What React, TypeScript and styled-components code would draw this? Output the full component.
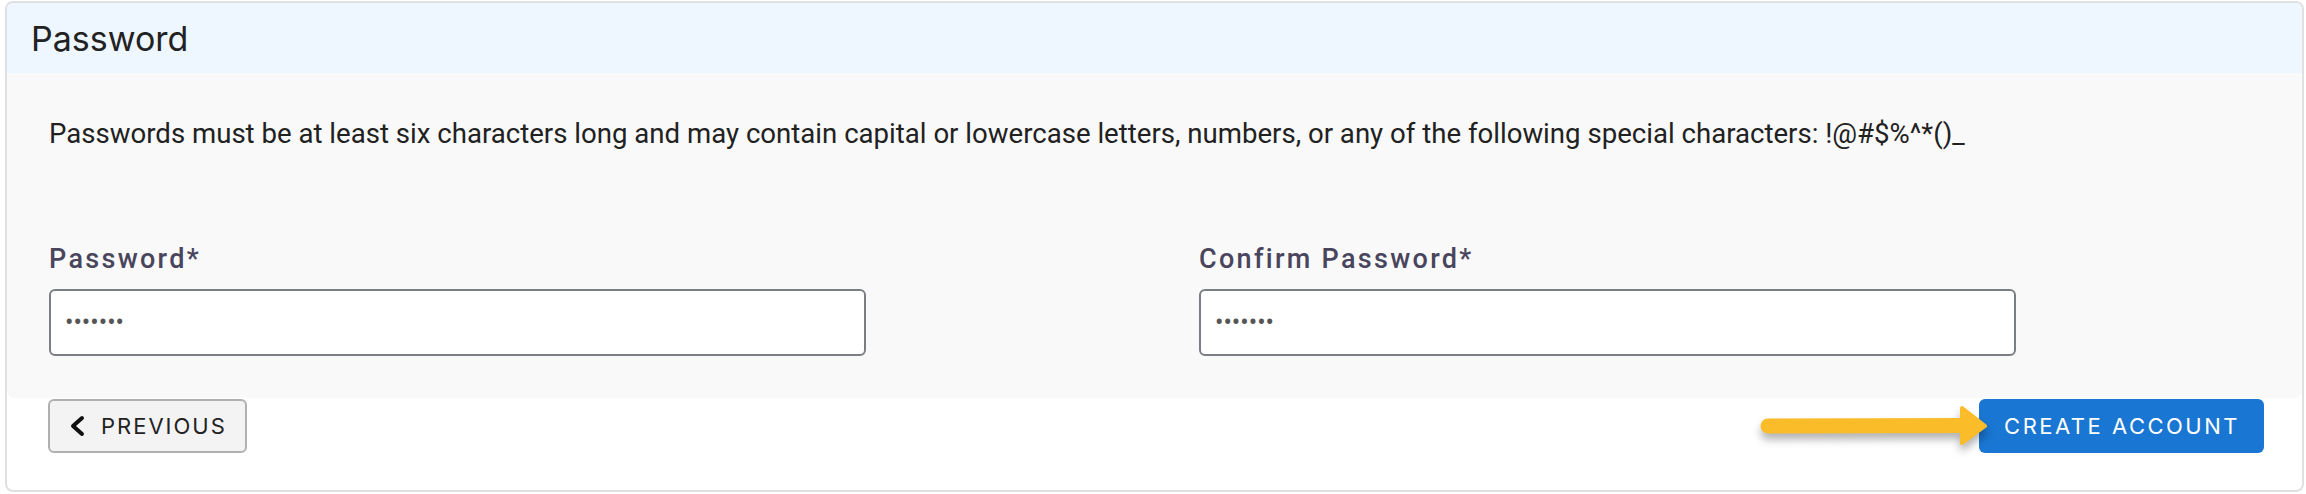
import React from 'react';
import styled, { createGlobalStyle } from 'styled-components';

const GlobalStyle = createGlobalStyle`
  body {
    margin: 0;
    background: #ffffff;
    font-family: Roboto, 'Liberation Sans', sans-serif;
  }
`;

const Page = styled.div`
  padding: 1px 2px 2px 5px;
`;

const Card = styled.section`
  border: 2px solid #e0e0e0;
  border-radius: 8px;
  background: #ffffff;
  overflow: hidden;
`;

const CardHeader = styled.header`
  height: 70px;
  display: flex;
  align-items: center;
  padding-left: 24px;
  background: #eef6ff;
`;

const HeaderTitle = styled.h2`
  margin: 0;
  font-family: Inter, 'Liberation Sans', sans-serif;
  font-size: 34px;
  font-weight: 400;
  color: #222222;
`;

const Panel = styled.div`
  background: #f9f9f9;
  border-radius: 0 0 8px 8px;
  padding: 44px 42px 42px 42px;
`;

const Hint = styled.p`
  margin: 0;
  font-size: 27.6px;
  line-height: 34px;
  color: #212121;
`;

const FieldGrid = styled.div`
  display: grid;
  grid-template-columns: 1150px 1fr;
  margin-top: 93px;
`;

const Field = styled.div`
  display: flex;
  flex-direction: column;
  gap: 15px;
`;

const Label = styled.label`
  font-size: 27px;
  line-height: 30px;
  font-weight: 500;
  letter-spacing: 2.3px;
  color: #48455c;
`;

const PasswordInput = styled.input`
  box-sizing: border-box;
  width: 817px;
  height: 67px;
  padding: 0 14px;
  border: 2px solid #7b7e84;
  border-radius: 6px;
  background: #ffffff;
  font-family: Roboto, 'Liberation Sans', sans-serif;
  font-size: 25px;
  color: #555555;
  outline: none;
`;

const Actions = styled.div`
  display: flex;
  justify-content: space-between;
  align-items: flex-start;
  padding: 1px 38px 37px 41px;
`;

const ButtonSlot = styled.div`
  position: relative;
`;

const Button = styled.button<{ $primary?: boolean }>`
  display: flex;
  align-items: center;
  gap: 16px;
  height: 54px;
  box-sizing: border-box;
  padding: ${(p) => (p.$primary ? '0 24px 0 25px' : '0 18px 0 19px')};
  border: ${(p) => (p.$primary ? 'none' : '2px solid #b0b0b0')};
  border-radius: 6px;
  background: ${(p) => (p.$primary ? '#1976d2' : '#f3f3f3')};
  color: ${(p) => (p.$primary ? '#ffffff' : '#222222')};
  font-family: Inter, 'Liberation Sans', sans-serif;
  font-size: 22px;
  font-weight: 400;
  letter-spacing: ${(p) => (p.$primary ? '2.5px' : '2px')};
  cursor: pointer;
`;

const Pointer = styled.svg`
  position: absolute;
  left: -220px;
  top: 0;
  z-index: 2;
  overflow: visible;
  filter: drop-shadow(0 6px 4px rgba(0, 0, 0, 0.3));
  pointer-events: none;
`;

const Chevron = () => (
  <svg width="16" height="22" viewBox="0 0 16 22">
    <polyline
      points="13,3 4,11 13,19"
      fill="none"
      stroke="#111111"
      strokeWidth="4"
      strokeLinecap="round"
      strokeLinejoin="round"
    />
  </svg>
);

const App = () => {
  return (
    <Page>
      <GlobalStyle />
      <Card>
        <CardHeader>
          <HeaderTitle>Password</HeaderTitle>
        </CardHeader>
        <Panel>
          <Hint>
            Passwords must be at least six characters long and may contain capital or lowercase
            letters, numbers, or any of the following special characters: !@#$%^*()_
          </Hint>
          <FieldGrid>
            <Field>
              <Label htmlFor="password">Password*</Label>
              <PasswordInput id="password" type="password" defaultValue="1234567" readOnly />
            </Field>
            <Field>
              <Label htmlFor="confirm">Confirm Password*</Label>
              <PasswordInput id="confirm" type="password" defaultValue="1234567" readOnly />
            </Field>
          </FieldGrid>
        </Panel>
        <Actions>
          <Button>
            <Chevron />
            PREVIOUS
          </Button>
          <ButtonSlot>
            <Pointer width="232" height="54" viewBox="0 0 232 54">
              <line
                x1="9"
                y1="27"
                x2="208"
                y2="26.5"
                stroke="#fbbc2a"
                strokeWidth="15"
                strokeLinecap="round"
              />
              <polygon
                points="203,9 226,27 203,44"
                fill="#fbbc2a"
                stroke="#fbbc2a"
                strokeWidth="4"
                strokeLinejoin="round"
              />
            </Pointer>
            <Button $primary>CREATE ACCOUNT</Button>
          </ButtonSlot>
        </Actions>
      </Card>
    </Page>
  );
};

export default App;
